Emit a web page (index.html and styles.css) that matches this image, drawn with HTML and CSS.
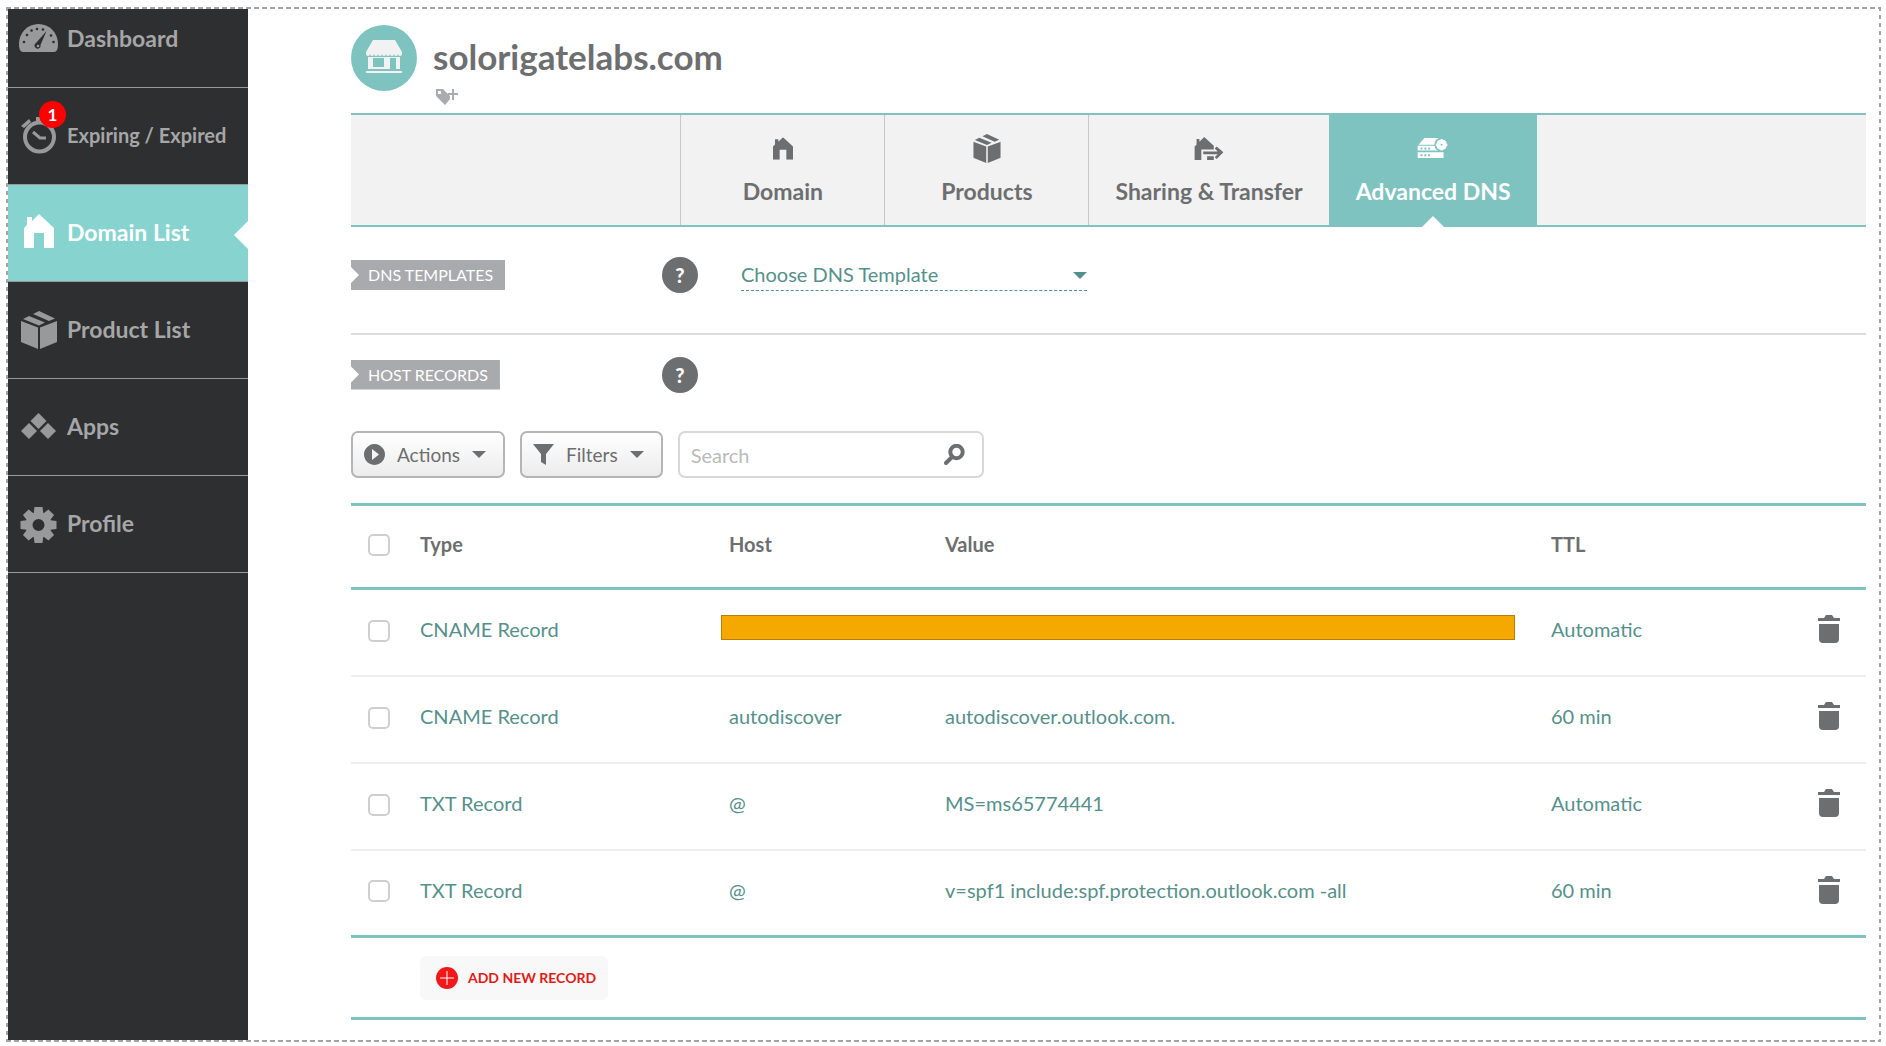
FILE: index.html
```html
<!DOCTYPE html>
<html lang="en">
<head>
<meta charset="utf-8">
<meta name="viewport" content="width=device-width, initial-scale=1">
<title>solorigatelabs.com - Advanced DNS</title>
<link rel="stylesheet" href="styles.css">
</head>
<body>
<svg class="sprite" aria-hidden="true">
  <symbol id="house" viewBox="0 0 30 34">
    <path d="M0 34V14L3 11V3H8V7L15 0L30 14V34H20V19H10V34Z"/>
  </symbol>
  <symbol id="box" viewBox="0 0 36 38">
    <path d="M0 10L17 16.500V38L0 31ZM36 10L19 16.500V38L36 31ZM2 8L8 5L24 11.500L18 14.500ZM12 3L18 0L34 7.500L28 10Z"/>
  </symbol>
  <symbol id="trash" viewBox="0 0 22 28">
    <path d="M0 3H6L8 0H14L16 3H22V6H0ZM1 9H21V24Q21 28 17 28H5Q1 28 1 24Z"/>
  </symbol>
</svg>
<div class="frame">
  <nav class="sidebar" aria-label="Main">
    <a class="side-item" href="#">
      <svg class="side-icon" viewBox="0 0 40 40"><path d="M4 34Q0 34 0 26A19.500 20 0 0 1 39 26Q39 34 35 34Z"/><g class="cut"><circle cx="5" cy="24" r="1.300"/><circle cx="8" cy="17" r="1.300"/><circle cx="12.500" cy="12.500" r="1.300"/><circle cx="18" cy="11" r="1.300"/><circle cx="24" cy="11.500" r="1.300"/><circle cx="32" cy="17.500" r="1.300"/><circle cx="34.500" cy="24" r="1.300"/><path d="M27.500 13L21.500 27A3 3 0 1 1 17 25Z"/></g><circle cx="19" cy="28" r="1.300"/></svg>
      <span>Dashboard</span>
    </a>
    <a class="side-item small" href="#">
      <svg class="side-icon" viewBox="0 0 40 40"><circle class="ring" cx="20.500" cy="22" r="14.500"/><path d="M2 11L10 4L12 7L5 13ZM17 2H23V8H17Z"/><path class="hand" d="M14 17L21 23H27"/></svg>
      <span class="badge">1</span>
      <span>Expiring / Expired</span>
    </a>
    <a class="side-item active" href="#" aria-current="page">
      <svg class="side-icon" viewBox="-5 -2 40 40"><use href="#house" width="30" height="34"/></svg>
      <span>Domain List</span>
    </a>
    <a class="side-item" href="#">
      <svg class="side-icon" viewBox="-2 -2 40 40"><use href="#box" width="36" height="38"/></svg>
      <span>Product List</span>
    </a>
    <a class="side-item" href="#">
      <svg class="side-icon" viewBox="0 0 40 40"><path d="M19.500 7L27.500 15L19.500 23L11.500 15ZM10 17L18 25L10 33L2 25ZM29 17L37 25L29 33L21 25Z"/></svg>
      <span>Apps</span>
    </a>
    <a class="side-item" href="#">
      <svg class="side-icon" viewBox="0 0 40 40"><g transform="translate(19.500 22)"><path fill-rule="evenodd" d="M-13 0A13 13 0 1 1 13 0A13 13 0 1 1 -13 0ZM-6 0A6 6 0 1 0 6 0A6 6 0 1 0 -6 0Z"/><g id="teeth"><path d="M-4 -18H4L5 -10H-5ZM-4 18H4L5 10H-5ZM-18 -4V4L-10 5V-5ZM18 -4V4L10 5V-5Z"/></g><use href="#teeth" transform="rotate(45)"/></g></svg>
      <span>Profile</span>
    </a>
  </nav>

  <main class="main">
    <header class="domain-head">
      <svg class="domain-logo" viewBox="0 0 66 66"><circle class="disc" cx="33" cy="33" r="33"/><path d="M22 15H44L51 27V29A2 2 0 0 1 47 29A2 2 0 0 1 43 29A2 2 0 0 1 39 29A2 2 0 0 1 35 29A2 2 0 0 1 31 29A2 2 0 0 1 27 29A2 2 0 0 1 23 29A2 2 0 0 1 19 29A2 2 0 0 1 15 29V27ZM15 46H51V48H15Z"/><path fill-rule="evenodd" d="M17 32H49V44H45V33H39V44H17ZM22 33V42H33V33Z"/></svg>
      <div class="domain-name">
        <h1>solorigatelabs.com</h1>
        <button class="tag-btn" type="button" aria-label="Add tag"><svg viewBox="0 0 22 18"><path fill-rule="evenodd" d="M0 1H7L14 8V11L9 17L0 8ZM2 3V6H5V3Z"/><path d="M16 1H18V5H22V7H18V12H16V7H12V5H16Z"/></svg></button>
      </div>
    </header>

    <nav class="tabs" aria-label="Domain settings">
      <a class="tab" href="#"><svg class="i-house" viewBox="0 0 30 34"><use href="#house"/></svg><span>Domain</span></a>
      <a class="tab" href="#"><svg class="i-box" viewBox="0 0 36 38"><use href="#box"/></svg><span>Products</span></a>
      <a class="tab" href="#"><svg class="i-share" viewBox="0 0 30 24"><path d="M0 24V10L2 8V2H5V5L10 0L20 9V13H7V24ZM9 15H24L21 12L23 10L30 16L23 23L21 21L24 18H9ZM13 20H20V24H13Z"/></svg><span>Sharing &amp; Transfer</span></a>
      <a class="tab active" href="#" aria-current="page"><svg class="i-dns" viewBox="0 0 32 24"><path d="M7 1H26L22 8H1ZM0 9H27V14H0ZM0 16H27V22H0Z"/><g class="cut"><circle cx="25" cy="8" r="7.500"/><path d="M3 11H5V13H3ZM7 11H9V13H7ZM11 11H13V13H11ZM3 18H5V20H3ZM7 18H9V20H7ZM11 18H13V20H11Z"/></g><circle cx="25" cy="8" r="5.500"/><path class="teeth" d="M25 2V14M19 8H31M21 4L29 12M29 4L21 12"/><circle class="cut" cx="25" cy="8" r="1"/></svg><span>Advanced DNS</span></a>
    </nav>

    <section class="setting">
      <h2 class="ribbon"><label for="template">DNS TEMPLATES</label></h2>
      <button class="help" type="button" aria-label="Help with DNS templates">?</button>
      <div class="select-line">
        <select id="template"><option>Choose DNS Template</option></select>
      </div>
    </section>

    <section class="setting records">
      <h2 class="ribbon">HOST RECORDS</h2>
      <button class="help" type="button" aria-label="Help with host records">?</button>
    </section>

    <div class="toolbar">
      <button class="tool" type="button"><svg viewBox="0 0 21 21"><path fill-rule="evenodd" d="M10.500 0A10.500 10.500 0 1 1 10.490 0ZM8 5V16L15 10.500Z"/></svg>Actions<i class="caret"></i></button>
      <button class="tool" type="button"><svg viewBox="0 0 21 21"><path d="M0 0H21L13 10V21L8 18V10Z"/></svg>Filters<i class="caret"></i></button>
      <div class="search">
        <input type="search" placeholder="Search" aria-label="Search">
        <button type="button" aria-label="Run search"><svg viewBox="0 0 21 21"><circle cx="12.500" cy="8" r="6.200"/><path d="M8 13L2 19"/></svg></button>
      </div>
    </div>

    <table class="records-table">
      <colgroup><col class="c-check"><col class="c-type"><col class="c-host"><col><col class="c-ttl"><col class="c-del"></colgroup>
      <thead>
        <tr><th><input type="checkbox" aria-label="Select all"></th><th>Type</th><th>Host</th><th>Value</th><th>TTL</th><th></th></tr>
      </thead>
      <tbody>
        <tr><td><input type="checkbox" aria-label="Select record 1"></td><td>CNAME Record</td><td class="redacted" colspan="2"><div class="bar"></div></td><td>Automatic</td><td><button class="del" type="button" aria-label="Delete record 1"><svg><use href="#trash"/></svg></button></td></tr>
        <tr><td><input type="checkbox" aria-label="Select record 2"></td><td>CNAME Record</td><td>autodiscover</td><td>autodiscover.outlook.com.</td><td>60 min</td><td><button class="del" type="button" aria-label="Delete record 2"><svg><use href="#trash"/></svg></button></td></tr>
        <tr><td><input type="checkbox" aria-label="Select record 3"></td><td>TXT Record</td><td>@</td><td>MS=ms65774441</td><td>Automatic</td><td><button class="del" type="button" aria-label="Delete record 3"><svg><use href="#trash"/></svg></button></td></tr>
        <tr><td><input type="checkbox" aria-label="Select record 4"></td><td>TXT Record</td><td>@</td><td>v=spf1 include:spf.protection.outlook.com -all</td><td>60 min</td><td><button class="del" type="button" aria-label="Delete record 4"><svg><use href="#trash"/></svg></button></td></tr>
      </tbody>
    </table>
    <div class="add-row">
      <button class="add" type="button"><svg viewBox="0 0 22 22"><circle cx="11" cy="11" r="11"/><path d="M11 4V18M4 11H18"/></svg>ADD NEW RECORD</button>
    </div>
  </main>
</div>
</body>
</html>
```
FILE: styles.css
```css
:root {
  --teal: #7ec3c0;
  --teal-text: #56908b;
  --gray: #6d6e70;
  --dark: #2e2f31;
}

* { box-sizing: border-box; }

body {
  margin: 0;
  padding: 7px 5px 4px 6px;
  min-height: 100vh;
  display: flex;
  background: #fff;
  color: var(--gray);
  font-family: Lato, "Open Sans", sans-serif;
  font-size: 20px;
  line-height: 24px;
}

a { color: inherit; text-decoration: none; }
h1, h2 { margin: 0; }
button, input, select { font: inherit; color: inherit; }
button { padding: 0; border: 0; background: none; }
svg { display: block; fill: currentColor; }
.sprite { position: absolute; width: 0; height: 0; }

.frame {
  position: relative;
  flex: 1;
  display: flex;
  padding: 1px;
}
/* dashed outline drawn over the sidebar edge */
.frame::after {
  content: "";
  position: absolute;
  inset: 0;
  pointer-events: none;
  background:
    repeating-linear-gradient(90deg, #a3a3a3 0 5px, #fff 5px 8px) top / 100% 2px no-repeat,
    repeating-linear-gradient(90deg, #a3a3a3 0 5px, #fff 5px 8px) bottom / 100% 2px no-repeat,
    repeating-linear-gradient(#a3a3a3 0 4px, #fff 4px 8px) left / 2px 100% no-repeat,
    repeating-linear-gradient(#a3a3a3 0 4px, #fff 4px 8px) right / 2px 100% no-repeat;
}

.sidebar {
  flex: 0 0 241px;
  background: var(--dark);
  color: #a6a6a7;
  font-size: 23px;
  font-weight: 700;
}
.side-item {
  position: relative;
  display: flex;
  align-items: center;
  gap: 8px;
  height: 97px;
  padding: 0 0 2px 12px;
  border-bottom: 1px solid #999;
}
.side-item:first-child { height: 80px; padding-bottom: 19px; }
.side-item.small { font-size: 20px; }
.side-icon { width: 40px; height: 40px; color: #98999b; overflow: visible; }
.side-icon .cut { fill: var(--dark); }
.side-icon .ring { fill: none; stroke: currentColor; stroke-width: 4; }
.side-icon .hand { fill: none; stroke: currentColor; stroke-width: 3; }
.side-item.active { background: #86d3cf; color: #fff; }
.side-item.active .side-icon { color: #fff; }
.side-item.active::after {
  content: "";
  position: absolute;
  right: 0;
  top: 36px;
  border: 14px solid transparent;
  border-left: 0;
  border-right-color: #fff;
}
.badge {
  position: absolute;
  left: 32px;
  top: 13px;
  width: 27px;
  height: 27px;
  border-radius: 50%;
  background: #f00;
  color: #fff;
  font-size: 17px;
  line-height: 27px;
  text-align: center;
}

.main { flex: 1; min-width: 0; padding: 17px 14px 0 103px; }

.domain-head { display: flex; gap: 16px; height: 88px; }
.domain-logo { width: 66px; height: 66px; fill: #f2f2f2; }
.domain-logo .disc { fill: var(--teal); }
.domain-name { padding-top: 11px; }
h1 { font-size: 35px; line-height: 40px; font-weight: 700; }
.tag-btn { display: block; margin: 12px 0 0 3px; color: #aaabae; }
.tag-btn svg { width: 22px; height: 18px; }

.tabs {
  display: flex;
  justify-content: center;
  height: 114px;
  background: #f2f2f2;
  border: solid var(--teal);
  border-width: 2px 0;
  font-size: 23px;
  font-weight: 700;
}
.tab {
  position: relative;
  display: flex;
  flex-direction: column;
  align-items: center;
  justify-content: space-between;
  min-width: 204px;
  padding: 19px 26px 22px;
  border-left: 1px solid #c8c8ca;
  white-space: nowrap;
}
.tab svg { height: 29px; padding: 3px 0; overflow: visible; }
.tab .i-house { width: 20px; }
.tab .i-box { width: 28px; padding: 0; }
.tab .i-share { width: 30px; }
.tab .i-dns { width: 32px; }
.tab.active { background: var(--teal); color: #fff; border-left-color: var(--teal); }
.tab .cut { fill: var(--teal); }
.tab .teeth { stroke: #fff; stroke-width: 2; }
.tab.active::after {
  content: "";
  position: absolute;
  bottom: -2px;
  border: 11px solid transparent;
  border-top: 0;
  border-bottom-color: #fff;
}

.setting {
  display: grid;
  grid-template-columns: 311px 79px 346px;
  align-items: center;
  height: 108px;
  padding-bottom: 10px;
  border-bottom: 2px solid #dcdcdd;
}
.setting.records { height: 96px; padding: 0 0 17px; border: 0; }
.ribbon {
  justify-self: start;
  padding: 0 12px 0 17px;
  background: #a9aaad;
  color: #fff;
  font-size: 16px;
  line-height: 30px;
  font-weight: 400;
  clip-path: polygon(0 0, 100% 0, 100% 100%, 0 100%, 0 23px, 8px 15px, 0 7px);
}
.help {
  width: 36px;
  height: 36px;
  border-radius: 50%;
  background: var(--gray);
  color: #fff;
  font-weight: 900;
}
.select-line {
  position: relative;
  color: var(--teal-text);
  border-bottom: 1px dashed;
}
.select-line select {
  display: block;
  width: 100%;
  height: 30px;
  padding: 0 0 2px;
  border: 0;
  background: none;
  appearance: none;
}
.select-line::after {
  content: "";
  position: absolute;
  right: 0;
  top: 12px;
  border: 7px solid transparent;
  border-bottom: 0;
  border-top-color: var(--teal-text);
}

.toolbar { display: flex; gap: 15px; height: 47px; }
.tool {
  display: flex;
  align-items: center;
  gap: 12px;
  padding: 0 17px 0 11px;
  border: 2px solid #b5b5b6;
  border-radius: 7px;
  background: linear-gradient(#fff, #ececec);
  font-size: 19px;
}
.tool svg { width: 21px; height: 21px; }
.caret { border: 7px solid transparent; border-top-color: var(--gray); border-bottom: 0; }
.search {
  display: flex;
  align-items: center;
  width: 306px;
  padding: 0 17px 0 11px;
  border: 2px solid #d8d8d9;
  border-radius: 7px;
}
.search input { flex: 1; min-width: 0; padding: 0; border: 0; outline: 0; background: none; }
.search input::placeholder { color: #b9babc; }
.search svg { width: 21px; height: 21px; fill: none; stroke: currentColor; stroke-width: 4; stroke-linecap: round; }

.records-table {
  width: 100%;
  margin-top: 25px;
  table-layout: fixed;
  border-collapse: collapse;
  border-top: 3px solid var(--teal);
  border-bottom: 3px solid var(--teal);
}
.c-check { width: 61px; }
.c-type { width: 309px; }
.c-host { width: 216px; }
.c-ttl { width: 267px; }
.c-del { width: 56px; }
th, td { height: 87px; padding: 0 8px 6px; text-align: left; }
td { color: var(--teal-text); border-top: 2px solid #eee; }
thead th { height: 84px; border-bottom: 3px solid var(--teal); }
th:first-child, td:first-child { padding: 0 0 3px 17px; }
input[type="checkbox"] {
  display: block;
  width: 22px;
  height: 22px;
  margin: 0;
  appearance: none;
  border: 2px solid #cfcfd0;
  border-radius: 5px;
  background: #fff;
}
td.redacted { padding: 0 28px 10px 0; }
.bar { height: 25px; background: #f5a800; border: 1px solid #b98000; }
.del { display: block; color: var(--gray); }
.del svg { width: 22px; height: 28px; }
.add-row {
  padding: 18px 0 17px 69px;
  border-bottom: 3px solid var(--teal);
}
.add {
  display: flex;
  align-items: center;
  gap: 10px;
  height: 44px;
  padding: 0 12px 0 16px;
  border-radius: 6px;
  background: #f8f8f8;
  color: #e01a16;
  font-size: 14px;
  font-weight: 700;
}
.add svg { width: 22px; height: 22px; fill: #f01818; stroke: #fff; }
.add circle { stroke: none; }
```
